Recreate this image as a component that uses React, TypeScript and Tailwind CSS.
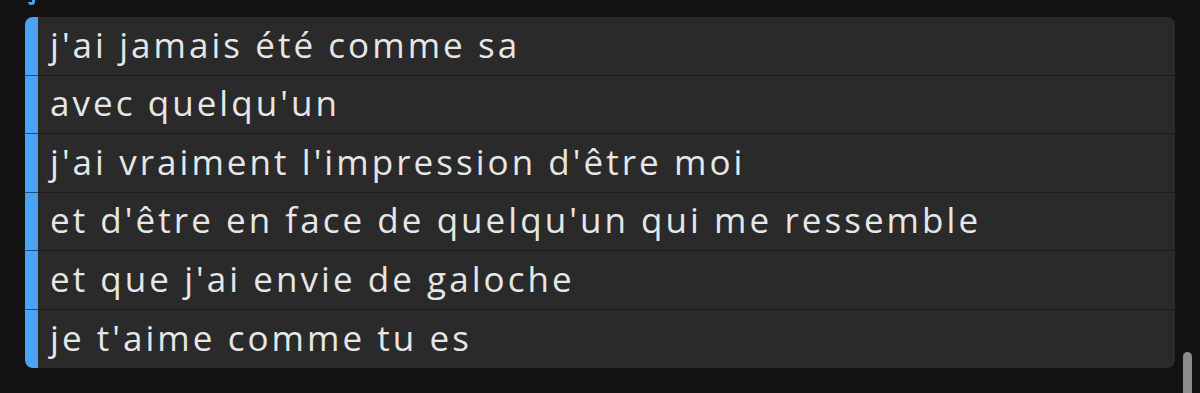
import React from "react";

const lines = [
  "j'ai jamais été comme sa",
  "avec quelqu'un",
  "j'ai vraiment l'impression d'être moi",
  "et d'être en face de quelqu'un qui me ressemble",
  "et que j'ai envie de galoche",
  "je t'aime comme tu es",
];

export default function App() {
  return (
    <div className="relative w-[1200px] h-[393px] bg-[#121212] overflow-hidden" style={{ fontFamily: "'Open Sans', sans-serif" }}>
      <div className="absolute left-[28px] top-[-6px] w-[7px] h-[11px] rounded-b-full border-b-[3px] border-r-[3px] border-[#4aa3f5]" />
      <div className="pt-[17px] pl-[25px] pr-[25px]">
        <div className="flex rounded-[8px] overflow-hidden bg-[#2a2a2a]">
          <div className="w-[13px] bg-[#4aa3f5] flex flex-col shrink-0">
            {lines.map((_, i) => (
              <div key={i} className={`h-[58.5px] ${i < lines.length - 1 ? "border-b border-[#1f4f7a]" : ""}`} />
            ))}
          </div>
          <div className="flex-1 flex flex-col">
            {lines.map((l, i) => (
              <div
                key={i}
                className={`h-[58.5px] flex items-center pl-[12px] pb-[2px] text-[35px] text-[#e6e6e6] tracking-[3.05px] ${i < lines.length - 1 ? "border-b border-[#1c1c1c]" : ""}`}
              >
                {l}
              </div>
            ))}
          </div>
        </div>
      </div>
      <div className="absolute left-[1183px] top-[352px] w-[9px] h-[60px] rounded-full bg-[#8c8c8c]" />
    </div>
  );
}
